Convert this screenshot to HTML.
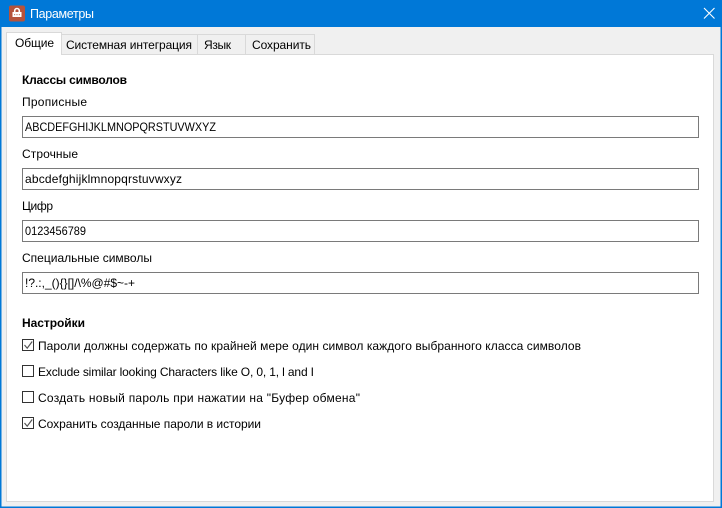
<!DOCTYPE html>
<html><head><meta charset="utf-8"><style>
html,body{margin:0;padding:0;width:722px;height:508px;overflow:hidden;background:#f0f0f0}
svg{display:block}
text{font-family:"Liberation Sans",sans-serif;font-size:12px;fill:#000;white-space:pre}
</style></head><body>
<svg width="722" height="508" viewBox="0 0 722 508" xmlns="http://www.w3.org/2000/svg">
<rect width="722" height="508" fill="#f0f0f0"/>
<rect width="722" height="27" fill="#0078d7"/>
<rect x="0" y="0" width="1.5" height="508" fill="#0078d7"/>
<rect x="720.5" y="0" width="1.5" height="508" fill="#0078d7"/>
<rect x="0" y="506.5" width="722" height="1.5" fill="#0078d7"/>
<rect x="9" y="5.5" width="16" height="16" rx="2" fill="#b5533c"/>
<path d="M14.7 12V10.8a2.3 2.3 0 0 1 4.6 0V12" fill="none" stroke="#fff" stroke-width="1.6"/>
<rect x="12.5" y="12" width="9" height="5" fill="#fff"/>
<rect x="14" y="14" width="1.2" height="1.2" fill="#c98a78"/><rect x="16.4" y="14" width="1.2" height="1.2" fill="#c98a78"/><rect x="18.8" y="14" width="1.2" height="1.2" fill="#c98a78"/>
<text x="30" y="18" textLength="64" style="fill:#fff;font-size:12.5px">Параметры</text>
<path d="M704 8L714.5 18.5M714.5 8L704 18.5" stroke="#fff" stroke-width="1.1" fill="none"/>

<rect x="6.5" y="54.5" width="707" height="447" fill="#fff" stroke="#d9d9d9"/>
<g fill="#f0f0f0" stroke="#d9d9d9">
<rect x="61.5" y="34.5" width="136" height="20"/>
<rect x="197.5" y="34.5" width="48" height="20"/>
<rect x="245.5" y="34.5" width="69" height="20"/>
</g>
<rect x="6.5" y="32.5" width="55" height="22" fill="#fff" stroke="#d9d9d9"/>
<rect x="7" y="53" width="54" height="3" fill="#fff"/>

<text x="15" y="47" textLength="39">Общие</text>
<text x="66" y="49" textLength="126">Системная интеграция</text>
<text x="204" y="49" textLength="27">Язык</text>
<text x="252" y="49" textLength="59">Сохранить</text>

<text x="22" y="84" textLength="105" font-weight="bold">Классы символов</text>
<text x="22" y="106" textLength="65">Прописные</text>
<text x="22" y="158" textLength="56">Строчные</text>
<text x="22" y="210" textLength="31">Цифр</text>
<text x="22" y="262" textLength="130">Специальные символы</text>

<g fill="#fff" stroke="#7a7a7a">
<rect x="22.5" y="116.5" width="676" height="21"/>
<rect x="22.5" y="168.5" width="676" height="21"/>
<rect x="22.5" y="220.5" width="676" height="21"/>
<rect x="22.5" y="272.5" width="676" height="21"/>
</g>
<text x="25" y="131" textLength="191" lengthAdjust="spacingAndGlyphs">ABCDEFGHIJKLMNOPQRSTUVWXYZ</text>
<text x="25" y="183" textLength="157">abcdefghijklmnopqrstuvwxyz</text>
<text x="25" y="235" textLength="61" lengthAdjust="spacingAndGlyphs">0123456789</text>
<text x="25" y="287" textLength="110" lengthAdjust="spacingAndGlyphs">!?.:,_(){}[]/\%@#$~-+</text>

<text x="22" y="327" textLength="63" font-weight="bold">Настройки</text>

<g fill="#fff" stroke="#333">
<rect x="22.5" y="339.5" width="11" height="11"/>
<rect x="22.5" y="365.5" width="11" height="11"/>
<rect x="22.5" y="391.5" width="11" height="11"/>
<rect x="22.5" y="417.5" width="11" height="11"/>
</g>
<path d="M24.5 345L27.2 348.2L32.2 341.5" fill="none" stroke="#555" stroke-width="1.2"/>
<path d="M24.5 423L27.2 426.2L32.2 419.5" fill="none" stroke="#555" stroke-width="1.2"/>
<text x="38" y="350" textLength="543">Пароли должны содержать по крайней мере один символ каждого выбранного класса символов</text>
<text x="38" y="376" textLength="276">Exclude similar looking Characters like O, 0, 1, l and I</text>
<text x="38" y="402" textLength="322">Создать новый пароль при нажатии на "Буфер обмена"</text>
<text x="38" y="428" textLength="223">Сохранить созданные пароли в истории</text>
</svg>
</body></html>
